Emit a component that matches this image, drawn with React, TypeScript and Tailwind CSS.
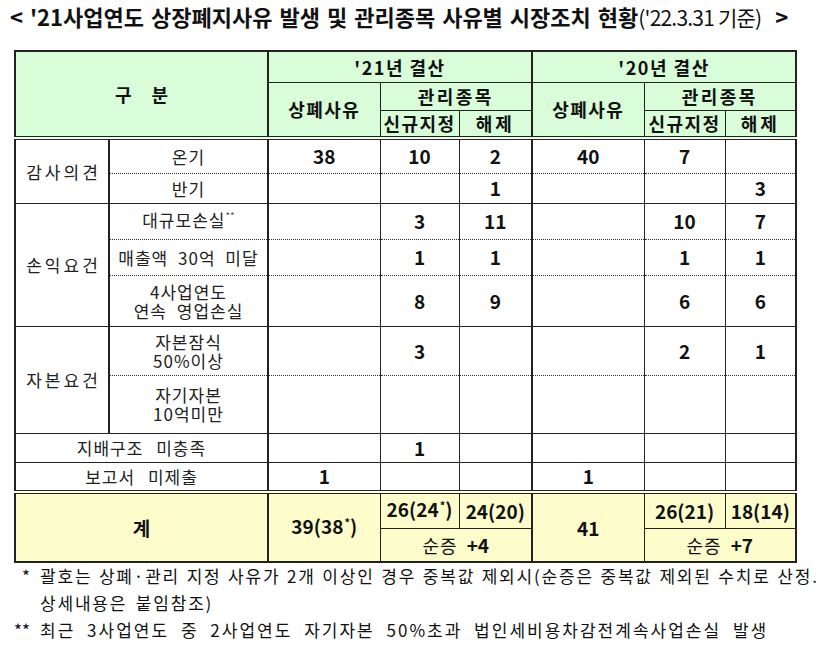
import React from 'react'

const R = {
  1: "border-r border-r-[#222]",
  2: "border-r-2 border-r-[#222]",
}
const BOT = {
  s: "border-b border-b-[#222]",
  d: "border-b border-b-[#333] [border-bottom-style:dotted]",
  dbl: "border-b-4 border-b-[#222] [border-bottom-style:double]",
  n: "",
}

type CellProps = {
  r?: 1 | 2
  b?: 'n' | 's' | 'd' | 'dbl'
  bg?: string
  cls?: string
  colSpan?: number
  rowSpan?: number
  children?: React.ReactNode
}

function Td({ r = 1, b = 's', bg = '', cls = '', colSpan, rowSpan, children }: CellProps) {
  return (
    <td colSpan={colSpan} rowSpan={rowSpan} className={`p-0 text-center align-middle ${R[r]} ${BOT[b]} ${bg} ${cls}`}>
      {children}
    </td>
  )
}

const NUM = "font-bold text-[19px] leading-[20px]"
const LBL = "text-[17px] leading-[19px] tracking-[1px] [word-spacing:5px] text-[#222] whitespace-nowrap"
const GRP = "text-[17px] tracking-[3px] pl-[3px] text-[#222]"
const HD = "font-bold text-[18px] leading-[20px] tracking-[1.5px]"
const GREEN = "bg-[#d8fdd8]"
const YEL = "bg-[#fdfdcc]"

function Star({ children }: { children: React.ReactNode }) {
  return <span className="text-[11px] relative -top-[7px] ml-[1px]">{children}</span>
}

export default function App() {
  return (
    <div className="w-[823px] h-[645px] bg-white overflow-hidden font-['Noto_Sans_CJK_KR',sans-serif] text-[#111]">
      <div className="h-[50px] pl-[10px] pt-[2px] whitespace-nowrap">
        <span className="font-bold text-[22px] tracking-[0px] [word-spacing:2px] leading-[28px]">&lt; '21사업연도 상장폐지사유 발생 및 관리종목 사유별 시장조치 현황</span>
        <span className="text-[21px] tracking-[-0.8px] leading-[28px]">('22.3.31 기준)</span>
        <span className="font-bold text-[22px] leading-[28px] ml-[14px]">&gt;</span>
      </div>

      <table className="ml-[14px] table-fixed border-collapse border-2 border-[#222] w-[781px]">
        <colgroup>
          <col className="w-[94px]" />
          <col className="w-[159px]" />
          <col className="w-[112px]" />
          <col className="w-[79px]" />
          <col className="w-[73px]" />
          <col className="w-[112px]" />
          <col className="w-[81px]" />
          <col className="w-[71px]" />
        </colgroup>
        <tbody>
          <tr className="h-[31px]">
            <Td colSpan={2} rowSpan={3} r={2} b="dbl" bg={GREEN} cls={`${HD} tracking-[20px] pl-[20px]`}>구분</Td>
            <Td colSpan={3} r={2} bg={GREEN} cls={HD}>'21년 결산</Td>
            <Td colSpan={3} r={2} bg={GREEN} cls={HD}>'20년 결산</Td>
          </tr>
          <tr className="h-[28px]">
            <Td rowSpan={2} b="dbl" bg={GREEN} cls={HD}>상폐사유</Td>
            <Td colSpan={2} r={2} bg={GREEN} cls={`${HD} tracking-[2.5px]`}>관리종목</Td>
            <Td rowSpan={2} b="dbl" bg={GREEN} cls={HD}>상폐사유</Td>
            <Td colSpan={2} r={2} bg={GREEN} cls={`${HD} tracking-[2.5px]`}>관리종목</Td>
          </tr>
          <tr className="h-[28px]">
            <Td b="dbl" bg={GREEN} cls={`${HD} tracking-[-1px]`}>신규지정</Td>
            <Td r={2} b="dbl" bg={GREEN} cls={`${HD} tracking-[3px]`}>해제</Td>
            <Td b="dbl" bg={GREEN} cls={`${HD} tracking-[-1px]`}>신규지정</Td>
            <Td r={2} b="dbl" bg={GREEN} cls={`${HD} tracking-[3px]`}>해제</Td>
          </tr>

          <tr className="h-[35px]">
            <Td rowSpan={2} r={2} cls={GRP}>감사의견</Td>
            <Td r={2} b="d" cls={LBL}>온기</Td>
            <Td b="d" cls={NUM}>38</Td>
            <Td b="d" cls={NUM}>10</Td>
            <Td r={2} b="d" cls={NUM}>2</Td>
            <Td b="d" cls={NUM}>40</Td>
            <Td b="d" cls={NUM}>7</Td>
            <Td r={2} b="d" cls={NUM}></Td>
          </tr>
          <tr className="h-[30px]">
            <Td r={2} cls={LBL}>반기</Td>
            <Td cls={NUM}></Td>
            <Td cls={NUM}></Td>
            <Td r={2} cls={NUM}>1</Td>
            <Td cls={NUM}></Td>
            <Td cls={NUM}></Td>
            <Td r={2} cls={NUM}>3</Td>
          </tr>

          <tr className="h-[36px]">
            <Td rowSpan={3} r={2} cls={GRP}>손익요건</Td>
            <Td r={2} b="d" cls={LBL}>대규모손실<span className="text-[10px] text-[#555] relative -top-[7px] tracking-[0px]">**</span></Td>
            <Td b="d" cls={NUM}></Td>
            <Td b="d" cls={NUM}>3</Td>
            <Td r={2} b="d" cls={NUM}>11</Td>
            <Td b="d" cls={NUM}></Td>
            <Td b="d" cls={NUM}>10</Td>
            <Td r={2} b="d" cls={NUM}>7</Td>
          </tr>
          <tr className="h-[36px]">
            <Td r={2} b="d" cls={`${LBL} tracking-[0.5px] [word-spacing:4px]`}>매출액 30억 미달</Td>
            <Td b="d" cls={NUM}></Td>
            <Td b="d" cls={NUM}>1</Td>
            <Td r={2} b="d" cls={NUM}>1</Td>
            <Td b="d" cls={NUM}></Td>
            <Td b="d" cls={NUM}>1</Td>
            <Td r={2} b="d" cls={NUM}>1</Td>
          </tr>
          <tr className="h-[51px]">
            <Td r={2} cls={LBL}>4사업연도<br />연속 영업손실</Td>
            <Td cls={NUM}></Td>
            <Td cls={NUM}>8</Td>
            <Td r={2} cls={NUM}>9</Td>
            <Td cls={NUM}></Td>
            <Td cls={NUM}>6</Td>
            <Td r={2} cls={NUM}>6</Td>
          </tr>

          <tr className="h-[49px]">
            <Td rowSpan={2} r={2} cls={GRP}>자본요건</Td>
            <Td r={2} b="d" cls={LBL}>자본잠식<br />50%이상</Td>
            <Td b="d" cls={NUM}></Td>
            <Td b="d" cls={NUM}>3</Td>
            <Td r={2} b="d" cls={NUM}></Td>
            <Td b="d" cls={NUM}></Td>
            <Td b="d" cls={NUM}>2</Td>
            <Td r={2} b="d" cls={NUM}>1</Td>
          </tr>
          <tr className="h-[58px]">
            <Td r={2} cls={LBL}>자기자본<br />10억미만</Td>
            <Td cls={NUM}></Td>
            <Td cls={NUM}></Td>
            <Td r={2} cls={NUM}></Td>
            <Td cls={NUM}></Td>
            <Td cls={NUM}></Td>
            <Td r={2} cls={NUM}></Td>
          </tr>

          <tr className="h-[29px]">
            <Td colSpan={2} r={2} cls={`${LBL} [word-spacing:8px]`}>지배구조 미충족</Td>
            <Td cls={NUM}></Td>
            <Td cls={NUM}>1</Td>
            <Td r={2} cls={NUM}></Td>
            <Td cls={NUM}></Td>
            <Td cls={NUM}></Td>
            <Td r={2} cls={NUM}></Td>
          </tr>
          <tr className="h-[30px]">
            <Td colSpan={2} r={2} b="dbl" cls={`${LBL} [word-spacing:8px]`}>보고서 미제출</Td>
            <Td b="dbl" cls={NUM}>1</Td>
            <Td b="dbl" cls={NUM}></Td>
            <Td r={2} b="dbl" cls={NUM}></Td>
            <Td b="dbl" cls={NUM}>1</Td>
            <Td b="dbl" cls={NUM}></Td>
            <Td r={2} b="dbl" cls={NUM}></Td>
          </tr>

          <tr className="h-[36px]">
            <Td colSpan={2} rowSpan={2} r={2} bg={YEL} cls={NUM}>계</Td>
            <Td rowSpan={2} bg={YEL} cls={NUM}>39(38<Star>*</Star>)</Td>
            <Td bg={YEL} cls={NUM}>26(24<Star>*</Star>)</Td>
            <Td r={2} bg={YEL} cls={NUM}>24(20)</Td>
            <Td rowSpan={2} bg={YEL} cls={NUM}>41</Td>
            <Td bg={YEL} cls={NUM}>26(21)</Td>
            <Td r={2} bg={YEL} cls={NUM}>18(14)</Td>
          </tr>
          <tr className="h-[34px]">
            <Td colSpan={2} r={2} bg={YEL} cls="text-[18px] leading-[20px] tracking-[1px]">순증 <span className="font-bold text-[19px] ml-[4px] tracking-[0px]">+4</span></Td>
            <Td colSpan={2} r={2} bg={YEL} cls="text-[18px] leading-[20px] tracking-[1px]">순증 <span className="font-bold text-[19px] ml-[4px] tracking-[0px]">+7</span></Td>
          </tr>
        </tbody>
      </table>

      <div className="text-[17px] text-[#111] whitespace-nowrap">
        <div className="flex h-[26px] items-center">
          <span className="w-[40px] pl-[22px] shrink-0">*</span>
          <span className="tracking-[1.8px] [word-spacing:1px]">괄호는 상폐·관리 지정 사유가 2개 이상인 경우 중복값 제외시(순증은 중복값 제외된 수치로 산정.</span>
        </div>
        <div className="flex h-[28px] items-center pl-[40px] tracking-[1.8px] [word-spacing:3px]">상세내용은 붙임참조)</div>
        <div className="flex h-[26px] items-center">
          <span className="w-[40px] pl-[14px] shrink-0">**</span>
          <span className="tracking-[2px] [word-spacing:6px]">최근 3사업연도 중 2사업연도 자기자본 50%초과 법인세비용차감전계속사업손실 발생</span>
        </div>
      </div>
    </div>
  )
}
